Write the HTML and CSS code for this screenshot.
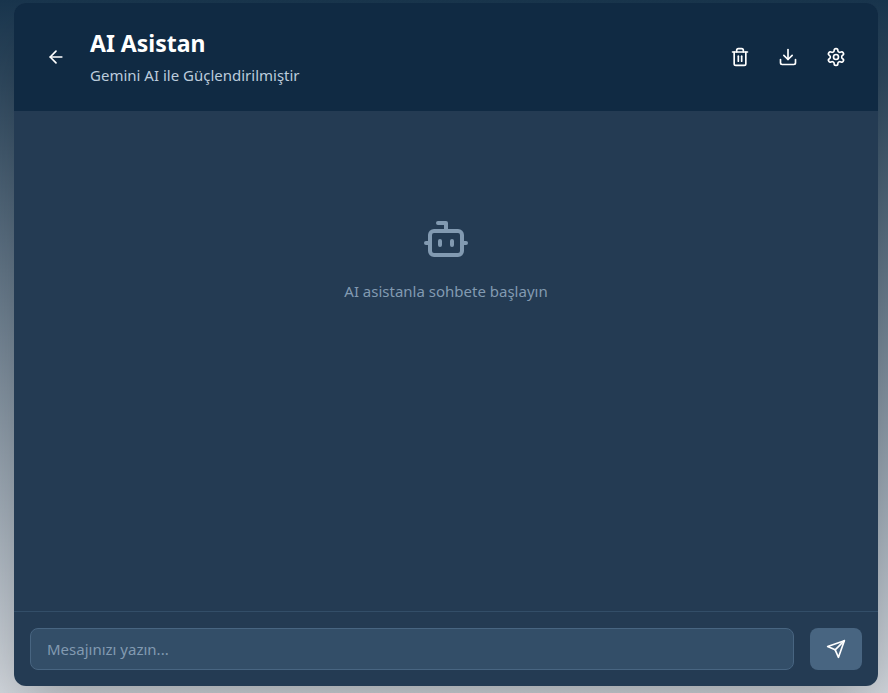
FILE: index.html
```html
<!DOCTYPE html>
<html lang="tr">
<head>
<meta charset="utf-8">
<meta name="viewport" content="width=device-width, initial-scale=1">
<title>AI Asistan</title>
<link rel="stylesheet" href="styles.css">
</head>
<body>
<main class="chat">
  <header class="chat-header">
    <a class="icon-button" href="#" aria-label="Geri">
      <svg class="icon" viewBox="0 0 24 24"><path d="m12 19-7-7 7-7"/><path d="M19 12H5"/></svg>
    </a>
    <div class="heading">
      <h1>AI Asistan</h1>
      <p>Gemini AI ile Güçlendirilmiştir</p>
    </div>
    <div class="actions">
      <button class="icon-button" type="button" aria-label="Sohbeti temizle">
        <svg class="icon" viewBox="0 0 24 24"><path d="M3 6h18"/><path d="M19 6v14c0 1-1 2-2 2H7c-1 0-2-1-2-2V6"/><path d="M8 6V4c0-1 1-2 2-2h4c1 0 2 1 2 2v2"/><path d="M10 11v6"/><path d="M14 11v6"/></svg>
      </button>
      <button class="icon-button" type="button" aria-label="Sohbeti indir">
        <svg class="icon" viewBox="0 0 24 24"><path d="M21 15v4a2 2 0 0 1-2 2H5a2 2 0 0 1-2-2v-4"/><path d="m7 10 5 5 5-5"/><path d="M12 15V3"/></svg>
      </button>
      <button class="icon-button" type="button" aria-label="Ayarlar">
        <svg class="icon" viewBox="0 0 24 24"><path d="M12.22 2h-.44a2 2 0 0 0-2 2v.18a2 2 0 0 1-1 1.73l-.43.25a2 2 0 0 1-2 0l-.15-.08a2 2 0 0 0-2.73.73l-.22.38a2 2 0 0 0 .73 2.73l.15.1a2 2 0 0 1 1 1.72v.51a2 2 0 0 1-1 1.74l-.15.09a2 2 0 0 0-.73 2.73l.22.38a2 2 0 0 0 2.73.73l.15-.08a2 2 0 0 1 2 0l.43.25a2 2 0 0 1 1 1.73V20a2 2 0 0 0 2 2h.44a2 2 0 0 0 2-2v-.18a2 2 0 0 1 1-1.73l.43-.25a2 2 0 0 1 2 0l.15.08a2 2 0 0 0 2.73-.73l.22-.39a2 2 0 0 0-.73-2.73l-.15-.08a2 2 0 0 1-1-1.74v-.5a2 2 0 0 1 1-1.74l.15-.09a2 2 0 0 0 .73-2.73l-.22-.38a2 2 0 0 0-2.73-.73l-.15.08a2 2 0 0 1-2 0l-.43-.25a2 2 0 0 1-1-1.73V4a2 2 0 0 0-2-2z"/><circle cx="12" cy="12" r="3"/></svg>
      </button>
    </div>
  </header>
  <section class="messages">
    <svg class="icon bot" viewBox="0 0 24 24"><path d="M12 8V4H8"/><rect width="16" height="12" x="4" y="8" rx="2"/><path d="M2 14h2"/><path d="M20 14h2"/><path d="M15 13v2"/><path d="M9 13v2"/></svg>
    <p>AI asistanla sohbete başlayın</p>
  </section>
  <form class="composer">
    <input type="text" aria-label="Mesaj" placeholder="Mesajınızı yazın...">
    <button class="send" type="submit" aria-label="Gönder">
      <svg class="icon" viewBox="0 0 24 24"><path d="m22 2-7 20-4-9-9-4Z"/><path d="M22 2 11 13"/></svg>
    </button>
  </form>
</main>
</body>
</html>
```
FILE: styles.css
```css
* {
  box-sizing: border-box;
}

body {
  margin: 0;
  min-height: 100vh;
  display: flex;
  padding: 3px 10px 7px 14px;
  overflow: hidden;
  font: 15px/24px "Segoe UI", "Noto Sans", sans-serif;
  background: linear-gradient(#19354d, #cfd4da);
}

h1,
p {
  margin: 0;
}

.chat {
  flex: 1;
  display: flex;
  flex-direction: column;
  border-radius: 12px;
  overflow: hidden;
  background: #243b53;
  box-shadow: 0 25px 50px -12px rgba(0, 0, 0, 0.25);
}

.chat-header {
  display: flex;
  align-items: center;
  gap: 16px;
  padding: 24px;
  background: #102a43;
}

.heading {
  flex: 1;
}

.heading h1 {
  font-size: 23px;
  line-height: 32px;
  font-weight: 700;
  color: #fff;
}

.heading p {
  margin-top: 4px;
  color: #bcccdc;
}

.actions {
  display: flex;
  gap: 12px;
}

.icon {
  display: block;
  width: 20px;
  height: 20px;
  fill: none;
  stroke: currentColor;
  stroke-width: 2;
  stroke-linecap: round;
  stroke-linejoin: round;
}

.icon-button {
  padding: 8px;
  border: 0;
  border-radius: 8px;
  background: none;
  color: #fff;
}

.messages {
  flex: 1;
  display: flex;
  flex-direction: column;
  align-items: center;
  gap: 16px;
  padding: 104px 24px 24px;
  color: #829ab1;
}

.bot {
  width: 48px;
  height: 48px;
}

.composer {
  display: flex;
  gap: 16px;
  padding: 16px;
  border-top: 1px solid #334e68;
}

.composer input {
  flex: 1;
  min-width: 0;
  padding: 8px 16px;
  border: 1px solid #486581;
  border-radius: 8px;
  background: #334e68;
  color: #fff;
  font: inherit;
}

.composer input::placeholder {
  color: #829ab1;
}

.send {
  display: grid;
  place-items: center;
  padding: 8px 16px;
  border: 0;
  border-radius: 8px;
  background: #486581;
  color: #fff;
}
```
